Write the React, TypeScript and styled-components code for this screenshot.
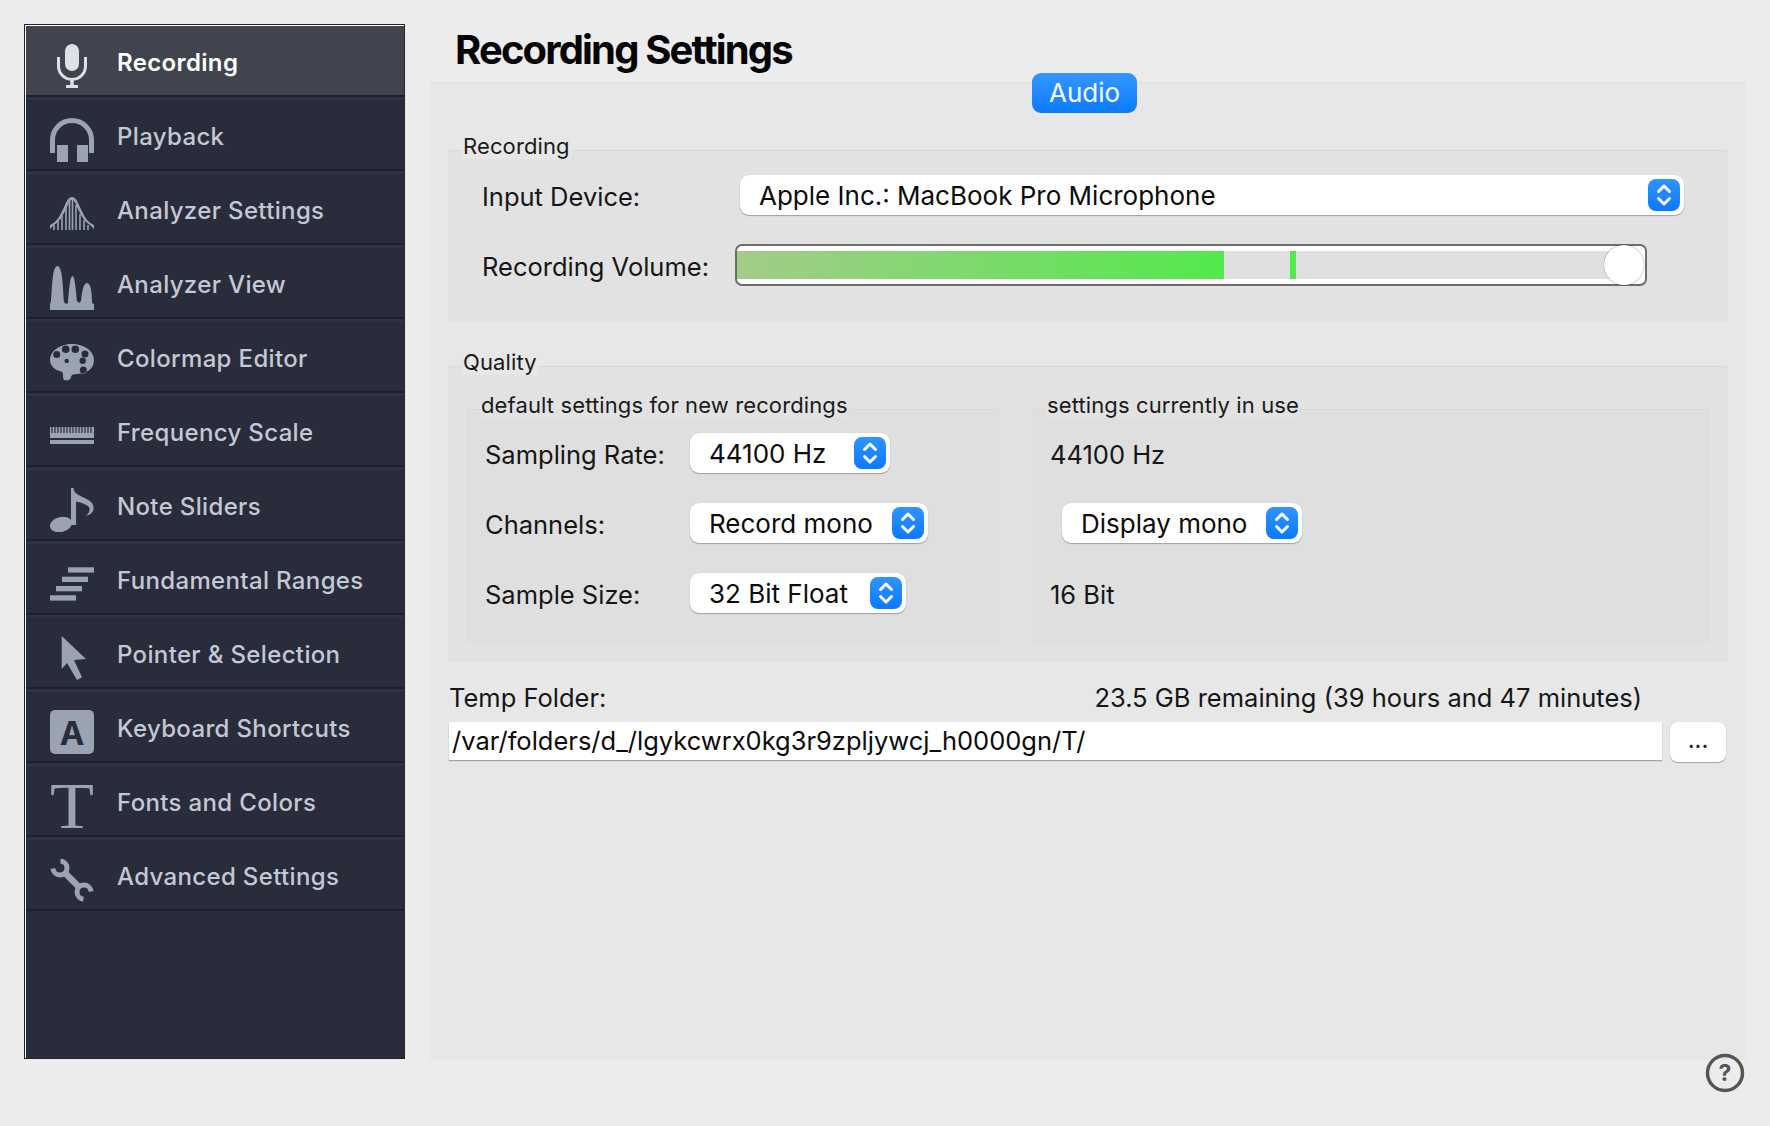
import * as React from 'react'
import styled, { createGlobalStyle } from 'styled-components'

const ICON = '#99a3b1'
const DARK = '#292d3b'

const GlobalStyle = createGlobalStyle`
  html, body { margin: 0; padding: 0; background: #ececec; }
  body { font-family: Inter, "Noto Sans", sans-serif; color: #111; }
`

const Page = styled.div`
  width: 1770px;
  height: 1126px;
  box-sizing: border-box;
  padding: 24px 24px 0;
  display: flex;
  gap: 25px;
  overflow: hidden;
`

const Sidebar = styled.nav`
  width: 381px;
  height: 1035px;
  flex: none;
  box-sizing: border-box;
  border: 1px solid #20222b;
  box-shadow: inset 1px 1px 0 #fff;
  padding: 1px 0 0 1px;
  background: ${DARK};
`

const Item = styled.div<{ $active?: boolean }>`
  height: 74px;
  box-sizing: border-box;
  padding: 18px 0 0 24px;
  display: flex;
  align-items: flex-start;
  gap: 23px;
  background: ${p => (p.$active ? '#41444f' : DARK)};
  background-clip: padding-box;
  border-bottom: 3px solid #2f3240;
  box-shadow: inset 0 -2px 0 #1d202c;
  &:last-child { height: 71px; border-bottom: none; }
`

const ItemLabel = styled.span<{ $active?: boolean }>`
  font-size: 24px;
  line-height: 38px;
  font-weight: ${p => (p.$active ? 600 : 500)};
  letter-spacing: 0.35px;
  color: ${p => (p.$active ? '#ffffff' : '#c3c8d4')};
`

const Icon = styled.svg`
  width: 44px;
  height: 44px;
  flex: none;
  display: block;
  fill: ${ICON};
`

const Main = styled.main`
  flex: 1;
  height: 1036px;
  display: flex;
  flex-direction: column;
  position: relative;
`

const Title = styled.h1`
  margin: 0;
  height: 58px;
  padding-left: 25px;
  font-size: 40px;
  line-height: 52px;
  font-weight: 700;
  letter-spacing: -1.85px;
  color: #050505;
`

const Panel = styled.section`
  flex: 1;
  background: #e7e7e7;
  border-top: 1px solid #e0e0e0;
  border-radius: 4px 4px 0 0;
  box-sizing: border-box;
  padding: 0 18px;
  display: flex;
  flex-direction: column;
`

const Tab = styled.div`
  align-self: flex-start;
  margin: -10px 0 0 584px;
  width: 105px;
  height: 40px;
  border-radius: 9px;
  background: linear-gradient(#3497fd, #0a7aff);
  color: #fff;
  font-size: 26px;
  line-height: 40px;
  text-align: center;
`

const Group = styled.div<{ $top: number; $height: number; $bg?: string }>`
  position: relative;
  margin-top: ${p => p.$top}px;
  height: ${p => p.$height}px;
  box-sizing: border-box;
  background: ${p => p.$bg || '#e2e2e2'};
  border-top: 1px solid #d8d8d8;
  border-radius: 4px 4px 0 0;
`

const Legend = styled.span<{ $bg?: string }>`
  position: absolute;
  left: 14px;
  top: -18px;
  padding: 0 1px;
  height: 26px;
  line-height: 26px;
  font-size: 22px;
  letter-spacing: 0.12px;
  white-space: nowrap;
  background: ${p => p.$bg || '#e7e7e7'};
  color: #1a1a1a;
`

const Row = styled.div<{ $pad: number; $label?: number; $top?: number; $right?: number }>`
  display: flex;
  align-items: center;
  margin-top: ${p => p.$top || 0}px;
  padding-left: ${p => p.$pad}px;
  padding-right: ${p => p.$right || 0}px;
  > :first-child { flex: ${p => (p.$label ? `0 0 ${p.$label}px` : 'none')}; }
`

const Label = styled.span`
  font-size: 25.5px;
  line-height: 40px;
  position: relative;
  top: 2px;
  white-space: nowrap;
  color: #161616;
`

const SelectBox = styled.div<{ $width?: number }>`
  ${p => (p.$width ? `width: ${p.$width}px;` : 'flex: 1;')}
  height: 40px;
  box-sizing: border-box;
  display: flex;
  align-items: center;
  justify-content: space-between;
  padding: 0 4px 0 19px;
  background: #fff;
  border-radius: 9px;
  box-shadow: 0 1px 1px rgba(0, 0, 0, 0.28), 0 0 1px rgba(0, 0, 0, 0.15);
  font-size: 26px;
  color: #0c0c0c;
  white-space: nowrap;
`

const Stepper = styled.span`
  width: 32px;
  height: 32px;
  border-radius: 8px;
  background: linear-gradient(#2f95fd, #0a79ff);
  display: flex;
  align-items: center;
  justify-content: center;
  flex: none;
`

const Slider = styled.div`
  width: 912px;
  height: 42px;
  box-sizing: border-box;
  border: 2px solid #6c6c6c;
  border-radius: 7px;
  background: #fff;
  padding: 5px 27px 5px 0;
  position: relative;
`

const Groove = styled.div`
  height: 28px;
  background: #dfdfdf;
  display: flex;
`

const Level = styled.div<{ $width: number }>`
  width: ${p => p.$width}px;
  background: linear-gradient(90deg, #a4cb8a, #53e94c);
`

const Mark = styled.div`
  width: 6px;
  margin-left: 66px;
  background: #53e94c;
`

const Handle = styled.div`
  position: absolute;
  right: 1px;
  top: -1px;
  width: 40px;
  height: 40px;
  border-radius: 50%;
  background: #fff;
  box-shadow: 0 0 1px rgba(0, 0, 0, 0.7);
`

const Columns = styled.div`
  display: flex;
  justify-content: space-between;
  padding: 0 18px;
  margin-top: 42px;
`

const Column = styled(Group)<{ $width: number }>`
  width: ${p => p.$width}px;
  margin-top: 0;
  padding-top: 23px;
`

const TempHead = styled.div`
  margin-top: 15px;
  height: 40px;
  display: flex;
  align-items: center;
  padding-left: 1px;
  font-size: 25.5px;
  color: #161616;
`

const Remaining = styled.span`
  margin-left: 488px;
`

const PathRow = styled.div`
  margin-top: 5px;
  display: flex;
  gap: 8px;
  padding-left: 1px;
`

const PathField = styled.div`
  width: 1213px;
  height: 38px;
  box-sizing: border-box;
  padding-left: 3px;
  background: #fff;
  box-shadow: 0 1px 1px rgba(0, 0, 0, 0.3);
  font-size: 25.5px;
  line-height: 37px;
  white-space: nowrap;
  color: #0c0c0c;
`

const Browse = styled.div`
  width: 56px;
  height: 40px;
  border-radius: 8px;
  background: #fff;
  box-shadow: 0 1px 1px rgba(0, 0, 0, 0.28), 0 0 1px rgba(0, 0, 0, 0.15);
  text-align: center;
  font-size: 24px;
  line-height: 36px;
  color: #222;
`

const Help = styled.svg`
  position: absolute;
  right: 1px;
  bottom: -33px;
  width: 40px;
  height: 40px;
`

const Chevrons = () => (
  <svg width="32" height="32" viewBox="0 0 32 32" fill="none" stroke="#fff" strokeWidth="3" strokeLinecap="round" strokeLinejoin="round">
    <path d="M10.5 12.5 16 7l5.5 5.5" />
    <path d="M10.5 19.5 16 25l5.5-5.5" />
  </svg>
)

const Select = ({ width, children }: { width?: number; children: React.ReactNode }) => (
  <SelectBox $width={width}>
    {children}
    <Stepper><Chevrons /></Stepper>
  </SelectBox>
)

const icons: Record<string, React.ReactNode> = {
  mic: (
    <g>
      <rect x="15" y="0" width="14" height="27" rx="7" fill="#dde0e7" />
      <path d="M8.5 13v9a13.5 13.5 0 0 0 27 0v-9" fill="none" stroke="#dde0e7" strokeWidth="3" />
      <rect x="20.3" y="35" width="3.4" height="7" fill="#dde0e7" />
      <rect x="16" y="41" width="12" height="3" fill="#dde0e7" />
    </g>
  ),
  headphones: (
    <g>
      <path d="M2.5 35V22a19.5 19.5 0 0 1 39 0v13" fill="none" stroke={ICON} strokeWidth="5" />
      <rect x="7" y="27" width="11" height="17" />
      <rect x="27" y="27" width="11" height="17" />
    </g>
  ),
  bell: (
    <g>
      <path d="M0 37v-4c8-3 11-12 15-20 2-5 4-8 7-8s5 3 7 8c4 8 7 17 15 20v4l-4-4c-7-4-10-12-14-20-1-3-2-5-4-5s-3 2-4 5c-4 8-7 16-14 20z" />
      <path d="M4 38V33M8 38V29M12 38V23M16 38V14M19.5 38V9M22.5 38V8M26 38V13M30 38V22M34 38V28M38 38V33" fill="none" stroke={ICON} strokeWidth="1.6" />
    </g>
  ),
  peaks: (
    <path d="M0 44V38l1-3c1-10 1-35 6.5-35S13 26 14 36l2 2c1-1 2 0 2-2 1-12 2-26 4.5-26S26 26 27 35l2 2 2-2c1-8 2-18 6-18s5 10 5 20l2 1v6z" />
  ),
  palette: (
    <path
      fillRule="evenodd"
      d="M22 4c12 0 22 7 22 16 0 10-9 14-17 14-4 0-6 1-6 3s-2 3.500-5 3.500-3-3-3-6c0-3-2-3-5-4C3 29 0 24 0 20 0 11 10 4 22 4zM6.700 11a3.500 3.500 0 1 0 0 7 3.500 3.500 0 0 0 0-7zM15.700 5.500a3.800 3.800 0 1 0 0 7.600 3.800 3.800 0 0 0 0-7.600zM25.300 5.500a3.800 3.800 0 1 0 0 7.600 3.800 3.800 0 0 0 0-7.600zM35 10.500a3.500 3.500 0 1 0 0 7 3.500 3.500 0 0 0 0-7zM16.700 18.700a2.200 2.200 0 1 0 0 4.400 2.200 2.200 0 0 0 0-4.400zM32.700 17.500a3.200 3.200 0 1 0 0 6.400 3.200 3.200 0 0 0 0-6.400zM33.300 26.500a3.500 3.500 0 1 0 0 7 3.500 3.500 0 0 0 0-7z"
    />
  ),
  ruler: (
    <g>
      <rect x="0" y="13" width="44" height="11" />
      <path d="M3 13v6.500" fill="none" />
      <path d="M2 13v6M5 13v6M8 13v6M11 13v6M14 13v6M17 13v6M20 13v6M23 13v6M26 13v6M29 13v6M32 13v6M35 13v6M38 13v6M41 13v6" fill="none" stroke={DARK} strokeWidth="1.2" />
      <rect x="0" y="26" width="44" height="4" />
    </g>
  ),
  note: (
    <g>
      <ellipse cx="11" cy="36.500" rx="11.200" ry="7.500" transform="rotate(-14 11 36.500)" />
      <path d="M21 0h2.600c0 4 3 6.500 9 9 7 3 11 6 11 11 0 4-3 7-7.500 7.500 2.500-2 3.500-4 3.500-6.500 0-3-5-5.500-13.500-7.500V37H21z" />
    </g>
  ),
  ranges: (
    <g>
      <rect x="18" y="5.300" width="26" height="5.300" />
      <rect x="12" y="14.700" width="26" height="5.300" />
      <rect x="6" y="24" width="26" height="5.300" />
      <rect x="0" y="33.300" width="26" height="5.300" />
    </g>
  ),
  pointer: <path d="M11.700 0v33l5.300-6 10 17 5-2.700-8-17.300 12-1z" />,
  key: (
    <g>
      <rect x="0" y="0" width="44" height="44" rx="5" />
      <text x="22" y="35" textAnchor="middle" fontFamily="Inter, sans-serif" fontWeight="700" fontSize="33" fill={DARK}>A</text>
    </g>
  ),
  serif: (
    <text x="0" y="44" textLength="44" lengthAdjust="spacingAndGlyphs" fontFamily='"Liberation Serif", serif' fontSize="66">T</text>
  ),
  wrench: (
    <g fill="none" stroke={ICON}>
      <path d="M10.500 3a7 7 0 1 1-7.500 7.500" strokeWidth="5" />
      <path d="M41 33.500a7 7 0 1 0-7.500 7.500" strokeWidth="5" />
      <path d="M15 15l14 14" strokeWidth="6.500" />
    </g>
  ),
}

const items = [
  ['mic', 'Recording'],
  ['headphones', 'Playback'],
  ['bell', 'Analyzer Settings'],
  ['peaks', 'Analyzer View'],
  ['palette', 'Colormap Editor'],
  ['ruler', 'Frequency Scale'],
  ['note', 'Note Sliders'],
  ['ranges', 'Fundamental Ranges'],
  ['pointer', 'Pointer & Selection'],
  ['key', 'Keyboard Shortcuts'],
  ['serif', 'Fonts and Colors'],
  ['wrench', 'Advanced Settings'],
]

export default function App() {
  return (
    <Page>
      <GlobalStyle />
      <Sidebar>
        {items.map(([icon, label], i) => (
          <Item key={label} $active={i === 0}>
            <Icon viewBox="0 0 44 44">{icons[icon]}</Icon>
            <ItemLabel $active={i === 0}>{label}</ItemLabel>
          </Item>
        ))}
      </Sidebar>
      <Main>
        <Title>Recording Settings</Title>
        <Panel>
          <Tab>Audio</Tab>
          <Group $top={37} $height={172}>
            <Legend>Recording</Legend>
            <Row $pad={34} $label={258} $right={44} $top={24}>
              <Label>Input Device:</Label>
              <Select>Apple Inc.: MacBook Pro Microphone</Select>
            </Row>
            <Row $pad={34} $label={253} $top={29}>
              <Label>Recording Volume:</Label>
              <Slider>
                <Groove>
                  <Level $width={487} />
                  <Mark />
                </Groove>
                <Handle />
              </Slider>
            </Row>
          </Group>
          <Group $top={44} $height={296}>
            <Legend>Quality</Legend>
            <Columns>
              <Column $top={0} $height={234} $width={534} $bg="#dfdfdf">
                <Legend $bg="#e2e2e2">default settings for new recordings</Legend>
                <Row $pad={19} $label={205}>
                  <Label>Sampling Rate:</Label>
                  <Select width={200}>44100 Hz</Select>
                </Row>
                <Row $pad={19} $label={205} $top={30}>
                  <Label>Channels:</Label>
                  <Select width={238}>Record mono</Select>
                </Row>
                <Row $pad={19} $label={205} $top={30}>
                  <Label>Sample Size:</Label>
                  <Select width={216}>32 Bit Float</Select>
                </Row>
              </Column>
              <Column $top={0} $height={234} $width={678} $bg="#dfdfdf">
                <Legend $bg="#e2e2e2">settings currently in use</Legend>
                <Row $pad={18}>
                  <Label>44100 Hz</Label>
                </Row>
                <Row $pad={30} $top={30}>
                  <Select width={240}>Display mono</Select>
                </Row>
                <Row $pad={18} $top={30}>
                  <Label>16 Bit</Label>
                </Row>
              </Column>
            </Columns>
          </Group>
          <TempHead>
            <span>Temp Folder:</span>
            <Remaining>23.5 GB remaining (39 hours and 47 minutes)</Remaining>
          </TempHead>
          <PathRow>
            <PathField>/var/folders/d_/lgykcwrx0kg3r9zpljywcj_h0000gn/T/</PathField>
            <Browse>...</Browse>
          </PathRow>
        </Panel>
        <Help viewBox="0 0 40 40">
          <circle cx="20" cy="20" r="17.500" fill="none" stroke="#555" strokeWidth="3.500" />
          <text x="20" y="28" textAnchor="middle" fontFamily="Inter, sans-serif" fontWeight="700" fontSize="23" fill="#555">?</text>
        </Help>
      </Main>
    </Page>
  )
}
